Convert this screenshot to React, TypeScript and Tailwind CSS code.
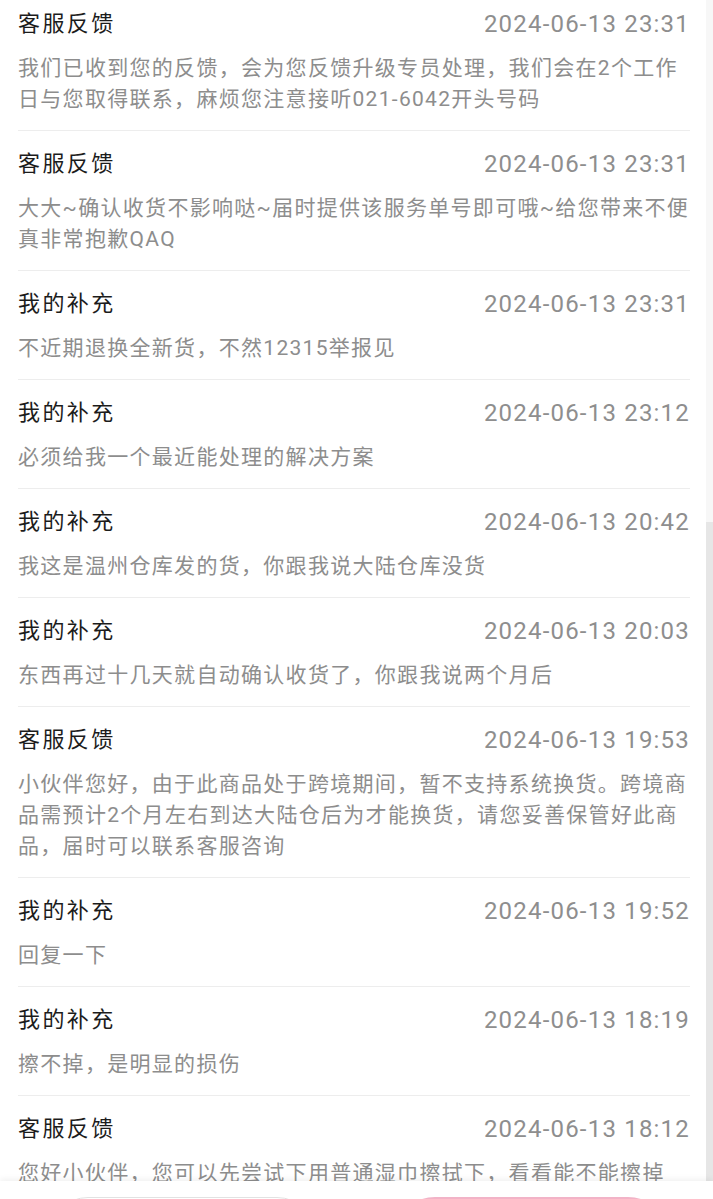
type Entry = {
  title: string;
  time: string;
  lines: string[];
};

const entries: Entry[] = [
  {
    title: "客服反馈",
    time: "2024-06-13 23:31",
    lines: [
      "我们已收到您的反馈，会为您反馈升级专员处理，我们会在2个工作",
      "日与您取得联系，麻烦您注意接听021-6042开头号码",
    ],
  },
  {
    title: "客服反馈",
    time: "2024-06-13 23:31",
    lines: ["大大~确认收货不影响哒~届时提供该服务单号即可哦~给您带来不便", "真非常抱歉QAQ"],
  },
  { title: "我的补充", time: "2024-06-13 23:31", lines: ["不近期退换全新货，不然12315举报见"] },
  { title: "我的补充", time: "2024-06-13 23:12", lines: ["必须给我一个最近能处理的解决方案"] },
  { title: "我的补充", time: "2024-06-13 20:42", lines: ["我这是温州仓库发的货，你跟我说大陆仓库没货"] },
  { title: "我的补充", time: "2024-06-13 20:03", lines: ["东西再过十几天就自动确认收货了，你跟我说两个月后"] },
  {
    title: "客服反馈",
    time: "2024-06-13 19:53",
    lines: [
      "小伙伴您好，由于此商品处于跨境期间，暂不支持系统换货。跨境商",
      "品需预计2个月左右到达大陆仓后为才能换货，请您妥善保管好此商",
      "品，届时可以联系客服咨询",
    ],
  },
  { title: "我的补充", time: "2024-06-13 19:52", lines: ["回复一下"] },
  { title: "我的补充", time: "2024-06-13 18:19", lines: ["擦不掉，是明显的损伤"] },
  {
    title: "客服反馈",
    time: "2024-06-13 18:12",
    lines: ["您好小伙伴，您可以先尝试下用普通湿巾擦拭下，看看能不能擦掉"],
  },
];

function FeedbackItem({ entry, first }: { entry: Entry; first?: boolean }) {
  return (
    <div className={`${first ? "pt-[8px]" : "pt-[17px]"} pb-[15px] border-b border-[#ededed]`}>
      <div className="flex h-8 items-center justify-between">
        <span className="text-[22px] leading-8 tracking-[2.4px] text-[#1c1c1c]">{entry.title}</span>
        <span className="text-[24px] leading-8 tracking-[1.2px] text-[#8e8e8e]">{entry.time}</span>
      </div>
      <div className="mt-[13px]">
        {entry.lines.map((line, i) => (
          <div key={i} className="whitespace-nowrap text-[21px] leading-[31px] tracking-[1.3px] text-[#8d8d8d]">
            {line}
          </div>
        ))}
      </div>
    </div>
  );
}

export default function App() {
  return (
    <div className="flex h-[1199px] flex-col overflow-hidden bg-white font-['Roboto','Noto_Sans_CJK_SC',sans-serif]">
      <div className="flex h-[1181px] shrink-0 overflow-hidden">
        <div className="min-w-0 flex-1 pl-[18px] pr-[16px]">
          {entries.map((e, i) => (
            <FeedbackItem key={i} entry={e} first={i === 0} />
          ))}
        </div>
        {/* scrollbar */}
        <div className="flex w-[7px] shrink-0 flex-col bg-[#f7f7f7]">
          <div className="h-[522px] shrink-0" />
          <div className="flex-1 bg-[#e6e6e6]" />
        </div>
      </div>

      <div className="relative z-10 flex shrink-0 gap-[78px] bg-white pl-[48px] pt-[16px] shadow-[0_-2px_6px_rgba(0,0,0,0.06)]">
        <button className="h-[80px] w-[269px] rounded-full border border-[#e2e2e2] bg-white" />
        <button className="h-[80px] w-[273px] rounded-full border-2 border-[#f2b3c7] bg-[#fdeef3]" />
      </div>
    </div>
  );
}
